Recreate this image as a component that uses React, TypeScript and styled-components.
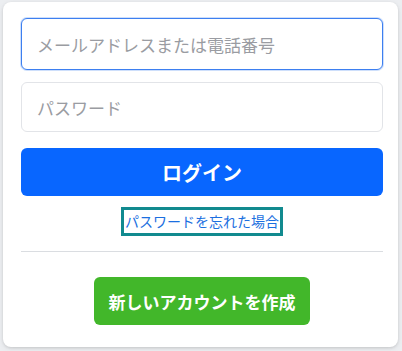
import React from "react";
import styled, { createGlobalStyle } from "styled-components";

const GlobalStyle = createGlobalStyle`
  html, body {
    margin: 0;
    padding: 0;
    background: #eceef1;
    font-family: "Noto Sans CJK JP", "Noto Sans", "Liberation Sans", sans-serif;
  }
`;

const Page = styled.div`
  width: 402px;
  height: 351px;
  padding: 2px 4px 4px 3px;
  box-sizing: border-box;
`;

const Card = styled.form`
  background: #fff;
  border-radius: 8px;
  box-shadow: 0 1px 3px rgba(0, 0, 0, 0.12), 0 2px 6px rgba(0, 0, 0, 0.06);
  padding: 16px 15px 20px 18px;
  display: flex;
  flex-direction: column;
  height: 100%;
  box-sizing: border-box;
`;

const Field = styled.input<{ $focus?: boolean }>`
  height: ${(p) => (p.$focus ? 52 : 50)}px;
  box-sizing: border-box;
  border: 1px solid ${(p) => (p.$focus ? "#3d7ff0" : "#e2e4e8")};
  box-shadow: ${(p) => (p.$focus ? "0 0 0 1px rgba(61,127,240,0.25)" : "none")};
  border-radius: 6px;
  padding: 0 15px;
  font-family: inherit;
  font-size: 17px;
  color: #1c1e21;
  outline: none;
  caret-color: #1a5fd8;
  &::placeholder {
    color: #9a9ca2;
  }
`;

const LoginButton = styled.button`
  margin-top: 16px;
  height: 48px;
  border: none;
  border-radius: 6px;
  background: #0866ff;
  color: #fff;
  font-family: inherit;
  font-size: 20px;
  font-weight: 700;
`;

const LinkRow = styled.div`
  display: flex;
  justify-content: center;
  margin-top: 11px;
`;

const ForgotLink = styled.a`
  display: block;
  padding: 1px 1px 2px;
  border: 3px solid #118a8f;
  color: #1b6fe0;
  font-size: 14px;
  line-height: 20px;
  text-decoration: none;
  background: #fff;
`;

const Divider = styled.hr`
  border: none;
  border-top: 1px solid #dadde1;
  margin: 15px 0 25px;
`;

const CreateRow = styled.div`
  display: flex;
  justify-content: center;
`;

const CreateButton = styled.button`
  width: 216px;
  height: 48px;
  border: none;
  border-radius: 6px;
  background: #42b72a;
  color: #fff;
  font-family: inherit;
  font-size: 17px;
  font-weight: 700;
`;

export default function App() {
  return (
    <>
      <GlobalStyle />
      <Page>
        <Card onSubmit={(e) => e.preventDefault()}>
          <Field $focus placeholder="メールアドレスまたは電話番号" autoFocus />
          <Field type="password" placeholder="パスワード" style={{ marginTop: 12 }} />
          <LoginButton type="submit">ログイン</LoginButton>
          <LinkRow>
            <ForgotLink href="#">パスワードを忘れた場合</ForgotLink>
          </LinkRow>
          <Divider />
          <CreateRow>
            <CreateButton type="button">新しいアカウントを作成</CreateButton>
          </CreateRow>
        </Card>
      </Page>
    </>
  );
}
